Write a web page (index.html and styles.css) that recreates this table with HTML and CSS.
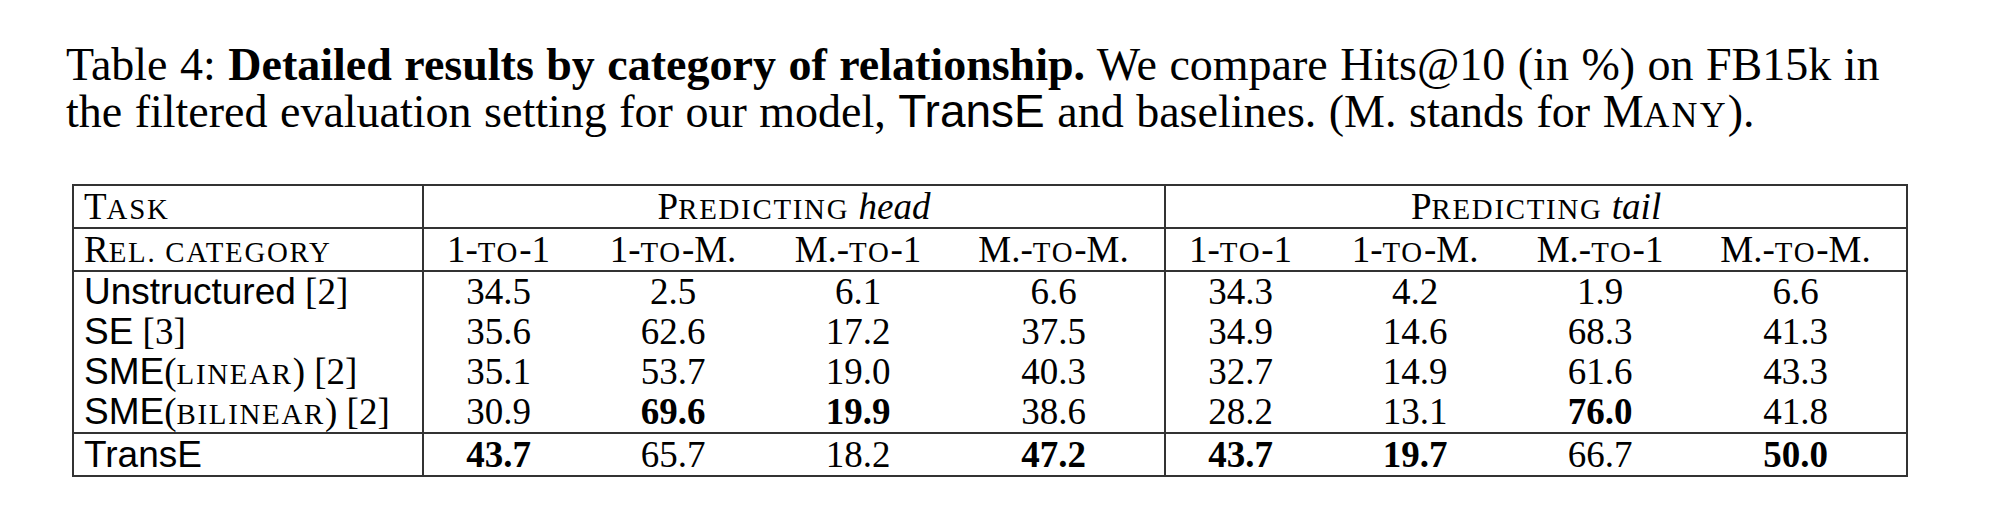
FILE: index.html
```html
<!DOCTYPE html>
<html lang="en">
<head>
    <meta charset="UTF-8">
    <title>Table 4</title>
    <link rel="stylesheet" href="styles.css">
</head>
<body>
    <div class="caption">
        <div class="caption-line">Table 4: <b>Detailed results by category of relationship.</b> We compare Hits@10 (in %) on FB15k in</div>
        <div class="caption-line">the filtered evaluation setting for our model, <span class="sans">TransE</span> and baselines. (M. stands for M<span class="sc">ANY</span>).</div>
    </div>

    <table class="results">
        <colgroup>
            <col class="c-label">
            <col class="c-11"><col class="c-1m"><col class="c-m1"><col class="c-mm">
            <col class="c-11"><col class="c-1m"><col class="c-m1"><col class="c-mm">
        </colgroup>
        <tr class="line head">
            <td class="label">T<span class="sc">ASK</span></td>
            <td colspan="4" class="group">P<span class="sc">REDICTING</span> <i>head</i></td>
            <td colspan="4" class="group">P<span class="sc">REDICTING</span> <i>tail</i></td>
        </tr>
        <tr class="line head">
            <td class="label">R<span class="sc">EL. CATEGORY</span></td>
            <td>1-<span class="sc">TO</span>-1</td>
            <td>1-<span class="sc">TO</span>-M.</td>
            <td>M.-<span class="sc">TO</span>-1</td>
            <td class="group-end">M.-<span class="sc">TO</span>-M.</td>
            <td>1-<span class="sc">TO</span>-1</td>
            <td>1-<span class="sc">TO</span>-M.</td>
            <td>M.-<span class="sc">TO</span>-1</td>
            <td>M.-<span class="sc">TO</span>-M.</td>
        </tr>
        <tr>
            <td class="label"><span class="sans">Unstructured</span> [2]</td>
            <td>34.5</td><td>2.5</td><td>6.1</td><td class="group-end">6.6</td>
            <td>34.3</td><td>4.2</td><td>1.9</td><td>6.6</td>
        </tr>
        <tr>
            <td class="label"><span class="sans">SE</span> [3]</td>
            <td>35.6</td><td>62.6</td><td>17.2</td><td class="group-end">37.5</td>
            <td>34.9</td><td>14.6</td><td>68.3</td><td>41.3</td>
        </tr>
        <tr>
            <td class="label"><span class="sans">SME</span>(<span class="sc">LINEAR</span>) [2]</td>
            <td>35.1</td><td>53.7</td><td>19.0</td><td class="group-end">40.3</td>
            <td>32.7</td><td>14.9</td><td>61.6</td><td>43.3</td>
        </tr>
        <tr class="line">
            <td class="label"><span class="sans">SME</span>(<span class="sc">BILINEAR</span>) [2]</td>
            <td>30.9</td><td><b>69.6</b></td><td><b>19.9</b></td><td class="group-end">38.6</td>
            <td>28.2</td><td>13.1</td><td><b>76.0</b></td><td>41.8</td>
        </tr>
        <tr class="last">
            <td class="label"><span class="sans">TransE</span></td>
            <td><b>43.7</b></td><td>65.7</td><td>18.2</td><td class="group-end"><b>47.2</b></td>
            <td><b>43.7</b></td><td><b>19.7</b></td><td>66.7</td><td><b>50.0</b></td>
        </tr>
    </table>
</body>
</html>
```

FILE: styles.css
```css
body {
    margin: 0;
    background: #fff;
    color: #000;
    font-family: "Liberation Serif", "Times New Roman", serif;
}
.caption {
    padding: 41px 0 0 66px;
    font-size: 46px;
    word-spacing: 1px;
    white-space: nowrap;
}
.caption-line {
    height: 47px;
    line-height: 47px;
}
.sans {
    font-family: "Liberation Sans", Arial, sans-serif;
}
/* small caps drawn by hand: capitals at a smaller size, a little tracked */
.sc {
    font-size: 0.78em;
    letter-spacing: 0.06em;
    line-height: 1;
}
.results {
    margin: 49px 0 0 72px;
    border-collapse: collapse;
    border: 2px solid #333;
    table-layout: fixed;
    width: 1836px;
    font-size: 37px;
}
.results td {
    padding: 0;
    height: 40px;
    line-height: 38px;
    text-align: center;
    white-space: nowrap;
}
.results tr.head td {
    height: 41px;
}
.results tr.last td {
    height: 41px;
}
.results tr.line td {
    border-bottom: 2px solid #333;
}
.results td.label {
    text-align: left;
    padding-left: 10px;
    border-right: 2px solid #333;
}
.results td.group,
.results td.group-end {
    border-right: 2px solid #333;
}
.c-label { width: 350px; }
.c-11 { width: 150px; }
.c-1m { width: 200px; }
.c-m1 { width: 170px; }
.c-mm { width: 222px; }
```
